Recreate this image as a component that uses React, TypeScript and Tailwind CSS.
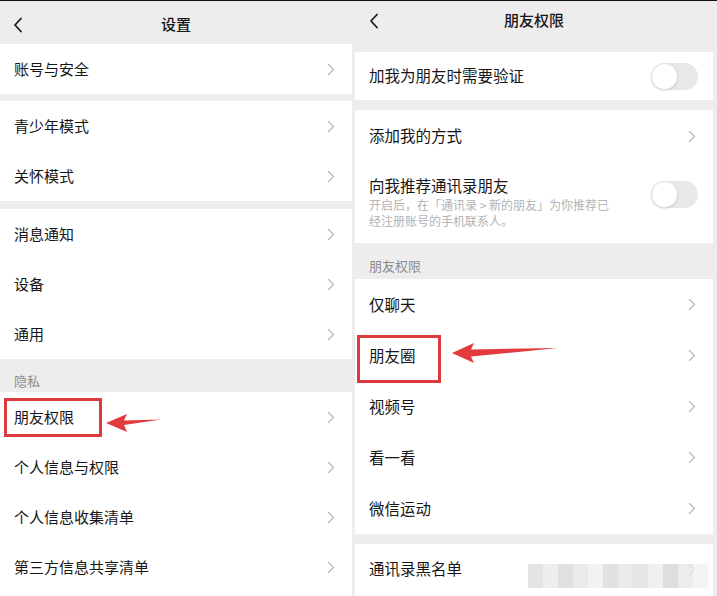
import React from "react";

const FONT = { fontFamily: '"Noto Sans CJK SC", "Noto Sans", sans-serif' };

function Chevron() {
  return (
    <svg width="8" height="13" viewBox="0 0 8 13" fill="none" className="shrink-0">
      <path d="M1.5 1.5 L6.5 6.5 L1.5 11.5" stroke="#b8b8b8" strokeWidth="1.3" strokeLinecap="round" strokeLinejoin="round" />
    </svg>
  );
}

function Back() {
  return (
    <svg width="10" height="16" viewBox="0 0 10 16" fill="none">
      <path d="M8 1.5 L2 8 L8 14.5" stroke="#1a1a1a" strokeWidth="1.8" strokeLinecap="round" strokeLinejoin="round" />
    </svg>
  );
}

function Toggle() {
  return (
    <div className="relative h-[27px] w-[47px] shrink-0 rounded-full bg-[#e8e8e8]">
      <div className="absolute left-0 top-0 h-[27px] w-[27px] rounded-full border border-[#e2e2e2] bg-white shadow-[0_1px_2px_rgba(0,0,0,0.12)]" />
    </div>
  );
}

type RowProps = { label: string; h: string; size: string };

function Row({ label, h, size }: RowProps) {
  return (
    <div className={`flex items-center justify-between pl-[14px] pr-[17px] ${h}`}>
      <span className={`${size} text-[#161616]`}>{label}</span>
      <Chevron />
    </div>
  );
}

function LeftPanel() {
  const L = "text-[15px]";
  return (
    <div className="flex w-[352px] shrink-0 flex-col">
      <div className="relative flex h-[43px] shrink-0 items-center justify-center">
        <div className="absolute left-[13px] top-[16px]">
          <Back />
        </div>
        <span className="mt-[3px] text-[15px] font-medium text-[#161616]">设置</span>
      </div>
      <div className="bg-white">
        <Row label="账号与安全" h="h-[50px]" size={L} />
      </div>
      <div className="mt-[7px] bg-white">
        <Row label="青少年模式" h="h-[50px]" size={L} />
        <Row label="关怀模式" h="h-[50px]" size={L} />
      </div>
      <div className="mt-[8px] bg-white">
        <Row label="消息通知" h="h-[50px]" size={L} />
        <Row label="设备" h="h-[50px]" size={L} />
        <Row label="通用" h="h-[50px]" size={L} />
      </div>
      <div className="flex h-[33px] items-end pb-[1px] pl-[14px]">
        <span className="text-[13px] leading-[20px] text-[#8c8c8c]">隐私</span>
      </div>
      <div className="flex-1 bg-white">
        <Row label="朋友权限" h="h-[50px]" size={L} />
        <Row label="个人信息与权限" h="h-[50px]" size={L} />
        <Row label="个人信息收集清单" h="h-[50px]" size={L} />
        <Row label="第三方信息共享清单" h="h-[50px]" size={L} />
      </div>
    </div>
  );
}

function RightPanel() {
  const R = "text-[15.5px]";
  return (
    <div className="flex flex-1 flex-col pl-[3px] pr-[4px]">
      <div className="relative flex h-[43px] shrink-0 items-center justify-center">
        <div className="absolute left-[14px] top-[12px]">
          <Back />
        </div>
        <span className="mb-[4px] text-[15px] font-medium text-[#161616]">朋友权限</span>
      </div>
      <div className="mt-[8px] flex h-[48px] items-center justify-between bg-white pl-[14px] pr-[15px]">
        <span className={`${R} text-[#161616]`}>加我为朋友时需要验证</span>
        <Toggle />
      </div>
      <div className="mt-[10px] bg-white">
        <Row label="添加我的方式" h="h-[52px]" size={R} />
        <div className="flex h-[81px] items-start justify-between pl-[14px] pr-[15px] pt-[11px]">
          <div className="flex flex-col">
            <span className={`${R} leading-[24px] text-[#161616]`}>向我推荐通讯录朋友</span>
            <span className="text-[12px] leading-[16px] text-[#b3b3b3]">
              开启后，在「通讯录 &gt; 新的朋友」为你推荐已
              <br />
              经注册账号的手机联系人。
            </span>
          </div>
          <div className="mt-[8px]">
            <Toggle />
          </div>
        </div>
      </div>
      <div className="flex h-[36px] items-end pb-[3px] pl-[14px]">
        <span className="text-[13px] leading-[20px] text-[#8c8c8c]">朋友权限</span>
      </div>
      <div className="bg-white">
        <Row label="仅聊天" h="h-[51px]" size={R} />
        <Row label="朋友圈" h="h-[51px]" size={R} />
        <Row label="视频号" h="h-[51px]" size={R} />
        <Row label="看一看" h="h-[51px]" size={R} />
        <Row label="微信运动" h="h-[51px]" size={R} />
      </div>
      <div className="mt-[10px] flex-1 bg-white">
        <Row label="通讯录黑名单" h="h-[50px]" size={R} />
      </div>
    </div>
  );
}

const mosaic = ["#dedede", "#eaeaea", "#d9d9d9", "#e5e5e5", "#f0f0f0", "#dbdbdb", "#e6e6e6", "#e0e0e0", "#ededed", "#d7d7d7", "#e8e8e8", "#f2f2f2"];

export default function App() {
  return (
    <div className="relative flex h-[596px] w-[717px] overflow-hidden border-t border-[#111] bg-[#ededed]" style={FONT}>
      <LeftPanel />
      <RightPanel />

      {/* annotations */}
      <div className="pointer-events-none absolute left-[4px] top-[397px] h-[39px] w-[98px] border-[3px] border-[#dc3a3e]" />
      <div className="pointer-events-none absolute left-[357px] top-[334px] h-[48px] w-[84px] border-[3px] border-[#dc3a3e]" />
      <svg className="pointer-events-none absolute left-0 top-0" width="717" height="596" viewBox="0 0 717 596">
        <polygon points="106,422 127,413 124,419.5 161,418.5 124,424 127,431" fill="#e23a3d" />
        <polygon points="452,352 474,342 471,348.5 558,347 471,355.5 474,362" fill="#e23a3d" />
      </svg>

      {/* blurred watermark */}
      <div className="pointer-events-none absolute left-[528px] top-[563px] flex h-[24px] w-[180px] flex-wrap opacity-80">
        {mosaic.concat(mosaic).map((c, i) => (
          <div key={i} className="h-[12px] w-[15px]" style={{ background: c }} />
        ))}
      </div>
    </div>
  );
}
